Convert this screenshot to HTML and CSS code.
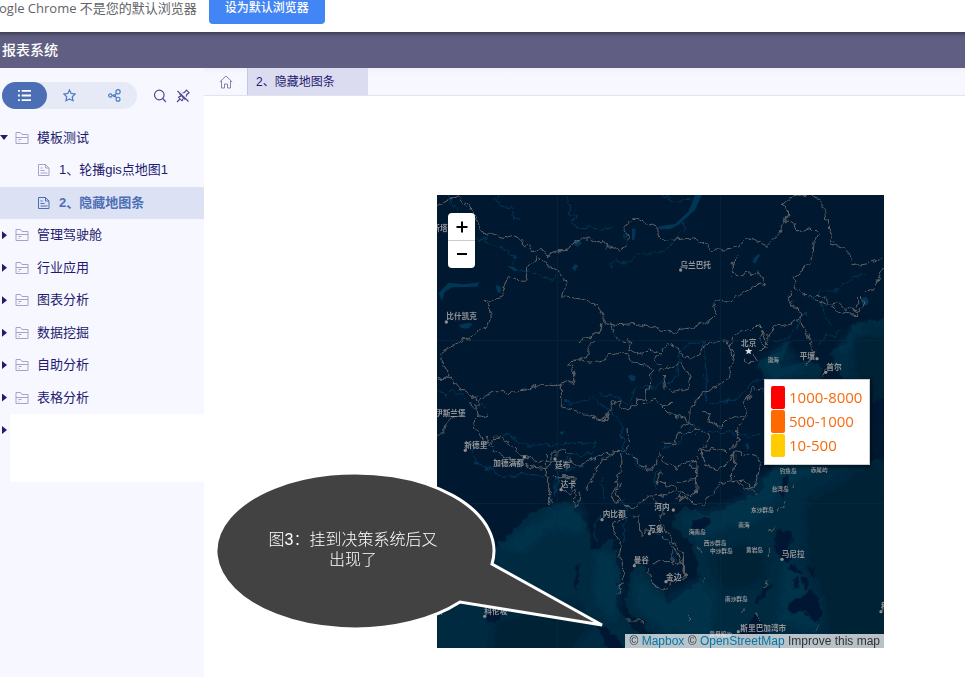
FILE: index.html
```html
<!DOCTYPE html>
<html lang="zh-CN">
<head>
<meta charset="utf-8">
<title>报表系统</title>
<link rel="stylesheet" href="styles.css">
</head>
<body>
<svg class="defs" aria-hidden="true">
  <symbol id="folder" viewBox="0 0 14 14"><path d="M1 12.500v-11h4.500l1.500 2h6v9zM1 6.500h12M3.500 8.500h3M3.500 10.500h1"/></symbol>
  <symbol id="file" viewBox="0 0 14 14"><path d="M1.500 1.500h7l3.500 3.500v7.500H1.500zM8.500 1.500V5H12M3.500 7.500h4M3.500 10h7M3.500 5h2"/></symbol>
</svg>
<div class="notice">
  <span class="notice-text">ogle Chrome 不是您的默认浏览器</span>
  <button class="notice-button" type="button">设为默认浏览器</button>
</div>
<header class="header"><h1>报表系统</h1></header>
<div class="workspace">
  <aside class="sidebar">
    <div class="tools">
      <div class="modes">
        <button class="mode active" type="button" aria-label="目录"><svg viewBox="0 0 14 14"><path d="M4 2h10M4 7h10M4 12h10M0 2h2M0 7h2M0 12h2"/></svg></button>
        <button class="mode" type="button" aria-label="收藏"><svg viewBox="0 0 14 14"><path d="M7 1l1.800 3.800 4.200.6-3 2.900.8 4.300L7 10.600l-3.800 2 .8-4.300-3-2.900 4.200-.6z"/></svg></button>
        <button class="mode" type="button" aria-label="分享"><svg viewBox="0 0 14 14"><circle cx="2.500" cy="7" r="1.800"/><circle cx="10.800" cy="3" r="2.300"/><circle cx="10.800" cy="11" r="2.100"/><circle cx="7" cy="7.200" r="1.100"/><path d="M4.300 7H6M7.800 6.300l1.300-1.500M7.800 8l1.500 1.500"/></svg></button>
      </div>
      <button class="tool" type="button" aria-label="搜索"><svg viewBox="0 0 14 14"><circle cx="6.300" cy="6" r="4.800"/><path d="M9.800 9.500l3 3.500"/></svg></button>
      <button class="tool" type="button" aria-label="取消固定"><svg viewBox="0 0 14 14"><path d="M6.500 4l2-.5 2-2.300 2.500 2.500-2.300 2-.5 2M3.500 4.800l5.800 5.700M5 7.500c-1.200-.2-2 .2-2.500.8l3.500 3.500c.8-.7 1-1.500.8-2.500M4 10l-3 3M1.500 2l11 10.500"/></svg></button>
    </div>
    <ul class="tree">
      <li class="row"><i class="arrow open"></i><svg class="icon"><use href="#folder"/></svg><a href="#">模板测试</a></li>
      <li class="row child"><svg class="icon"><use href="#file"/></svg><a href="#">1、轮播gis点地图1</a></li>
      <li class="row child selected"><svg class="icon"><use href="#file"/></svg><a href="#">2、隐藏地图条</a></li>
      <li class="row"><i class="arrow"></i><svg class="icon"><use href="#folder"/></svg><a href="#">管理驾驶舱</a></li>
      <li class="row"><i class="arrow"></i><svg class="icon"><use href="#folder"/></svg><a href="#">行业应用</a></li>
      <li class="row"><i class="arrow"></i><svg class="icon"><use href="#folder"/></svg><a href="#">图表分析</a></li>
      <li class="row"><i class="arrow"></i><svg class="icon"><use href="#folder"/></svg><a href="#">数据挖掘</a></li>
      <li class="row"><i class="arrow"></i><svg class="icon"><use href="#folder"/></svg><a href="#">自助分析</a></li>
      <li class="row"><i class="arrow"></i><svg class="icon"><use href="#folder"/></svg><a href="#">表格分析</a></li>
      <li class="row blank"><i class="arrow"></i><span class="cover"></span></li>
    </ul>
  </aside>
  <main class="main">
    <nav class="tabs">
      <a class="home" href="#" aria-label="首页"><svg viewBox="0 0 14 14"><path d="M.8 7L7 1l6.200 6M2.500 5.800v7.200h3V9h3v4h3V5.800"/></svg></a>
      <a class="tab" href="#">2、隐藏地图条</a>
    </nav>
    <div class="stage">
      <div class="map">
        <svg class="map-canvas" viewBox="0 0 1341 1359">
          <filter id="rough" x="0" y="0" width="1341" height="1359" filterUnits="userSpaceOnUse">
            <feTurbulence type="fractalNoise" baseFrequency=".045" numOctaves="2" seed="4"/>
            <feDisplacementMap in="SourceGraphic" scale="26" xChannelSelector="R" yChannelSelector="G"/>
          </filter>
          <filter id="haze" x="-20%" y="-20%" width="140%" height="140%"><feGaussianBlur stdDeviation="12"/></filter>
          <g filter="url(#rough)">
            <g class="sea" transform="translate(0 735)">
              <path d="M-20 650V500L130 420 160 330 200 300 260 240 300 205 340 200 400 180 412 210 440 240 462 290 455 325 490 325 510 300 525 295 550 400 540 480 550 520 600 570 630 650z"/>
              <path d="M665 650L650 590 620 545 575 520 565 490 575 440 590 375 625 380 640 420 680 455 685 490 730 465 780 430 785 370 760 310 705 260 715 225 750 200 800 225 850 210 900 185 960 160 1000 120 1020 60H1370V650z"/>
            </g>
            <g class="sea" transform="translate(849 315)">
              <path d="M115 190l30-25 25-10 20-30h20l-10 30-20 30 10 20 30-15 50-10 30 20 10 50 20 10v20H130v-60z"/>
              <path d="M330 155l45-25 5-30 25-30 35-5 80-20v255l-60 30v-90h-90l-20-30zM170 480h330V300l30 0v310H100l30-60z"/>
            </g>
            <g class="shelf" filter="url(#haze)">
              <path d="M330 945l90-30 35 45-20 60-120-20zM470 1065l70 10 15 130-20 90-70-80zM590 1125l80 80 120-60-10-120-60-60 180-50 90-90 110-60 60 60-120 50-60 100-180 50-20 120 60 60-20 140-130-30-100-80zM960 500l90-60 60 90-100 30zM1190 470l60-80 40-10-30 90zM1040 1080l60 60 60 100-20 80-120-40zM180 1060l120-90 60 20-100 90z"/>
            </g>
            <g class="deep" filter="url(#haze)"><path d="M1110 920l270-160v650H1190l-30-200-50-120zM1250 420l120 0v200l-110 40zM820 1090l90-40 80 30-10 80-110 30zM170 1280l250-60 30 80-60 80H170z"/></g>
            <g class="land" transform="translate(0 735)">
              <path d="M770 240l45-8 5 15-20 30-30-10zM1035 112l20-5-5 38-15 32-10-30zM1020 270l40-2 8 35-15 40 12 17-20 8-27-25-5-30zM1055 370l20 8 22 20-10 5-25-12zM1065 420l15-8 8 30-12 10zM1095 410l20 8-5 35-12-15zM1110 375l22 5 3 30-12-8zM1055 490l50-25 20-18 15 25 15 43-15 32-20-8-18-27-42 8zM950 490l30-40 25-22 5 8-30 38-25 22zM895 650l10-70 40-40 10-25 20 25 15 50 0 60zM145 530l15-20 25-5 5 25-20 22-20-5zM470 553l35 10 40 38 40 50h-60l-30-70zM422 375h8l-5 50-10 20-2-15zM650 385l15 5 15 18-10-2z"/>
            </g>
            <path class="land" d="M1290 635l45-25 30 5v60l-35-5-20 20zM1210 580l20-10 15 40-20 10z"/>
          </g>
          <g class="lakes">
            <path d="M5 295l30-32 45 5 48-6-8 13-75 2-22 14-8 27zM175 270l15 4 3 16-10 5zM65 390l30-7 13 4-15 14-20-2zM410 135l15 0 10 10-14 11-10-7zM405 220l8-12 11 3-10 18zM210 212l20 3 14 12-12 2zM585 100l11 3-3 28-8 7zM660 96l15-4v14zM669 94l45-7 40-37 20-50 20 0-20 45-50 45-25 12-30 1zM950 190l14-13 5 4-14 25-8-5zM960 225l8 2-4 8-5-3zM1273 310l15-5 8 15-7 13-14-5zM573 542l12-3 11 6-3 14-12-2zM366 711l17-2-8 12zM925 745l8 1 4 13-6 7z"/>
          </g>
          <g class="rivers" filter="url(#rough)">
            <path d="M30 0l10 20 25 32M185 0l-12 12 20 22 32 4 5 34 25-2M390 0l0 25 12 10-5 20 20 10-12 20 22 17 50-5 10 10 45-10M525 220l-3-17 13-7 35 12 36-34 60 0M115 130l35 7 30 20 25 2 15 20 20 10-15 20M245 230l35-5 20 15 50 14 10-22M555 105l14 10-8 22M678 0l30 20 55-5M728 80l15 10-20 35-10 20-45 28M1290 235l-50 15-40 38-40 0-20 12M1110 305l30 12 20 20 10 40 20 12M1145 450l20-30 30 4 20-25M1110 355l-20 15-10 30-20 20-40 20"/>
            <path d="M0 590l30 10 20-20 40 38 30 32 10-25 13 20M190 720l40 10 30 20 180-2 40-12-15 40-60 5-70 25M383 640v-18l30 3 50-15 60 40 30 30 5 60-5 50M490 600l50 7 40 25 12-55 40-5 20 10 20-20M110 740l-10 30 20 35 40 20 40 22 60-10 60 5M355 820l25 10 60-20 50-30M360 825l-5 80M565 765l20 15 15 30 25 15M655 885v-50l20-15"/>
            <path d="M673 565l20 5 20-20 15-80 25-25 50-2 5 140-3 30 10 15 80-12 60-60 40-5M670 760l50-10 50-60 40 20 100 5 30 15 25-20M500 915l-5-40 5-30M560 1040l4-130M340 890l10 40M485 960l-15 60 10 30M640 1000l60 40 20 70"/>
          </g>
          <g class="borders" filter="url(#rough)">
            <path d="M0 33l20-10 40-23 10 5 35 45 15 30 28 47 10-15 15 10 25 8 30-10 15 5 20 25 25 20 22-7 10 17 15 2 25-15 25 0 20-17 30-22 20 2 20 10 25 0 10 15 40 7 20-10 3-20-10-20 5-25 20-20 45 15 30 18 0 24 20 15 55-7 35-3 25 15 25 22 50-2 30-10 30-25 20 5 20 8 20 10 30-30 20-45 10-20-5-22-10-8 20-18 50-12 30 12 20 20 10 30 5 25 15 55 0 10 30 8 25 25 5 30 40-5 50-20"/>
            <path d="M300 182l-3 20-25 15-5 35-30 2-25-6-20 60-45 12 10 15 3 35-5 20-40 25-30 20-15 20M310 185l15 25 35 15 22 30 3 20-8 30 60 7 45 25 15 30 10 20 45 5 60-5 50 15 40 12 20-10 50-7 50-25 15-15-10-25 10-15 40 5 60-40 20-10 30-3-20-32-30-3-30 8-25-5 5-25 15-35M495 385l-5 25-35 15-30 22M520 385l10 30 15 20 35 7M1049 45l-5 30 25 3 10 30 50-8 15 15-13 30-3 30-15 35-45 35 15 35 20 20 20 5 30-5 30 30 25-5 20 20 10-8 30 15 10-25-5-25 20-20 20 0 10-30 15-30 20-40"/>
            <path d="M1060 285l0 25 10 30 20-3 5 30-30 15-50 15-20 25-20-15-10 30 20 20-20 15M885 495l-5-40 10-30 30-20 20 5 20-20 15 15 15 40 10-35M1090 370l5 20 20 40 15 40-20 40M1259 310l0 50-50-10-40-20-40-15M920 485v15h35v-20M1165 520l-5 25"/>
            <path d="M100 435l-20 0-20 10-25 10-25 25 5 35 20 5 0 25-20 3-15-5M0 550l45 0 20 25 55 35 30-5 10-15 50 0 50-4 50-18 50 4 20-5 30-10 0-30-15-20 15-10 40-10 10-40 15-13M410 495l50 10 40-8 15-18 40-5 20 15 50 20 20 25-5 30-10 20-5 30-25-5-2 20-25 15-20-5-5-25-15 5-10 20-15 35-30-5-25-10-80-25-3-45 0-20M120 615l0 30 10 20-20 20 15 40 40 20 20-22 45 35 20 22 45 15 20 5 80-5 15 12 25 0 50-20 20-10 40-10 20-5 10-10-5-50M155 722l-5 20 40 40 20 7 60 25 40 5 35-5 0-40 15 0 20-12 10 12 15 0M325 780l0 60 10 10 0 80M345 845l70 0-3 20M450 885l15-30 10-35 45-40 25-15 10 30-5 35-20 55-5 35 25 5M565 765l20 25 25 10 20 25 15 0 25-50M670 510l-20-20 20-15-35-10-25 20-35-20 10-25-20-10M0 730l20-20 5-20 25-25M100 620l35 45 20-5M620 630l30-20 15 20 40-5"/>
            <path d="M669 530l15-15 25 5 20-20 30 40-5 40-45 12-25-20-5-32M669 475l25-30 70 50 30-35 30-20 40-5 30 40-15 45-5 30-40 30-40 15-15 20-20 35 0 35-25 10M669 630l25 25 50 15 35 35-15 10-40 0-10 30-30 0M790 650l25 0 5 30 30 15 25-25 35-5 15-10-3-30 25-45 20 5 20-10M779 705l40 15-20 40-30 40-10 20 20 0 0 30-60 10M880 765l30-30-15-30 20-20 10-20M890 770l-10 30-40 25-35-15-10-40 25-10 50 10M675 780l5 25 40 15 30-20 30 0 0 40-5 60-40-5-20 10M890 770l70 15 10 20-15 70-30 10-20-25-20 0 5-60 0-30M740 905l60 30 20-40 30-30 75-10 30 40M670 830l-10 30 60 20 25 20"/>
            <path d="M340 880l0 35 10 10M370 880l25 20 15-20 5 20-5 40 15-10 5-40M580 960l-30 15-20 5 0 30 20 35-5 30 10 30 10 30-5 20-20 40M555 865l-20 15 10 30 20 25 35 0 20-20 40-20 30 5 25-15 15 25 20 5M585 960l20 0 5 65 15-20 45 5 50 60 25 50-5 35M635 1120l-5 15 25 40 20 8 10-8M645 1100h60v10l40-20-5 50-30 25M705 1065l0 35M650 905l30 45-10 30 30 50 45 60 0 50M685 1185l25-20-10-10M565 1275l40 0 20 20M955 1250l10 15 10 10"/>
            <path d="M1045 925l-20 25M1010 995l-15 20M994 1060v25M990 1150l-10 30M930 1240l-15 18M780 1055l15 25M803 1145l-3 25M757 1260v20M1130 1310l20-20M1073 865l-5 20"/>
          </g>
          <path class="grid-line" d="M361 0V1359M850 0V1359M0 437H1341M0 926H1341"/>
          <path class="capital" d="M935 458l3 7 8 0-6 5 2 8-7-4-7 4 2-8-6-5 8 0z"/>
          <g class="dots">
            <circle cx="28" cy="381" r="5"/><circle cx="731" cy="225" r="5"/><circle cx="1140" cy="491" r="5"/><circle cx="1166" cy="532" r="5"/><circle cx="85" cy="766" r="5"/><circle cx="262" cy="786" r="5"/><circle cx="354" cy="792" r="5"/><circle cx="372" cy="884" r="5"/><circle cx="495" cy="974" r="5"/><circle cx="709" cy="945" r="5"/><circle cx="637" cy="1016" r="5"/><circle cx="592" cy="1112" r="5"/><circle cx="687" cy="1160" r="5"/><circle cx="1035" cy="1093" r="5"/><circle cx="143" cy="1264" r="5"/><circle cx="904" cy="1310" r="5"/><circle cx="1332" cy="1250" r="5"/>
          </g>
          <g class="labels">
            <text x="-14" y="108">斯塔纳</text><text x="28" y="373">比什凯克</text><text x="730" y="218">乌兰巴托</text><text x="912" y="453">北京</text><text x="1088" y="493">平壤</text><text x="1168" y="525">首尔</text><text x="-6" y="662">伊斯兰堡</text><text x="82" y="759">新德里</text><text x="169" y="813">加德满都</text><text x="354" y="819">廷布</text><text x="371" y="877">达卡</text><text x="497" y="967">内比都</text><text x="652" y="946">河内</text><text x="634" y="1010">万象</text><text x="590" y="1105">曼谷</text><text x="687" y="1155">金边</text><text x="1034" y="1086">马尼拉</text><text x="142" y="1257">科伦坡</text><text x="910" y="1308">斯里巴加湾市</text><text x="-28" y="1257">马累</text><text x="1332" y="1242">科</text>
            <g class="small"><text x="992" y="501">渤海</text><text x="1028" y="835">钓鱼岛</text><text x="1121" y="832">赤尾屿</text><text x="1004" y="888">台湾岛</text><text x="942" y="951">东沙群岛</text><text x="904" y="996">南海</text><text x="755" y="1018">海南岛</text><text x="800" y="1049">西沙群岛</text><text x="819" y="1074">中沙群岛</text><text x="927" y="1072">黄岩岛</text><text x="864" y="1219">南沙群岛</text><text x="817" y="1323">曾母暗沙</text></g>
          </g>
        </svg>
        <div class="zoom">
          <button type="button" aria-label="放大"><svg viewBox="0 0 12 12"><path d="M6 .5v11M.5 6h11"/></svg></button>
          <button type="button" aria-label="缩小"><svg viewBox="0 0 12 12"><path d="M1 6h10"/></svg></button>
        </div>
        <ul class="legend">
          <li><i class="swatch red"></i>1000-8000</li>
          <li><i class="swatch orange"></i>500-1000</li>
          <li><i class="swatch yellow"></i>10-500</li>
        </ul>
        <div class="credit">© <a href="#">Mapbox</a> © <a href="#">OpenStreetMap</a> <a class="improve" href="#">Improve this map</a></div>
        <div class="callout">
          <svg viewBox="0 0 396 164"><path d="M278 94A139 78 0 1 0 246 132L388 155z"/></svg>
          <p>图3：挂到决策系统后又出现了</p>
        </div>
      </div>
    </div>
  </main>
</div>
</body>
</html>
```
FILE: styles.css
```css
* { box-sizing: border-box; }
body {
  margin: 0;
  min-height: 100vh;
  display: flex;
  flex-direction: column;
  overflow: hidden;
  background: #fff;
  color: #231a6e;
  font: 13px/20px "Liberation Sans", "Noto Sans CJK SC", sans-serif;
}
a { color: inherit; text-decoration: none; }
button { border: 0; padding: 0; background: none; color: inherit; font: inherit; }
ul { list-style: none; margin: 0; padding: 0; }
svg { fill: none; stroke: currentColor; }
.defs { position: absolute; width: 0; height: 0; }

.notice {
  display: flex;
  align-items: center;
  gap: 12px;
  height: 40px;
  margin: -8px 0 0 -1px;
  padding-bottom: 8px;
  color: #5f6368;
  font-family: "Open Sans", "Noto Sans CJK SC", sans-serif;
  white-space: nowrap;
}
.notice-button {
  width: 116px;
  height: 32px;
  border-radius: 4px;
  background: #4285f4;
  color: #fff;
  font-size: 12px;
  font-weight: 500;
}
.header {
  height: 36px;
  padding: 0 2px;
  background: linear-gradient(#3f3e56, #5b5a7b 4px, #605f83 8px);
  color: #fff;
}
.header h1 { margin: 0; font-size: 14px; font-weight: 500; line-height: 36px; }

.workspace { flex: 1; display: flex; }
.sidebar { flex: 0 0 204px; background: #f7f7ff; }
.tools { display: flex; align-items: center; padding: 14px 2px 13px; }
.modes { display: flex; margin-right: 16px; border-radius: 14px; background: #e5eaf6; color: #4c7cc4; }
.mode { display: grid; place-items: center; width: 45px; height: 27px; border-radius: 14px; }
.mode svg { width: 13px; height: 13px; stroke-width: 1.3; }
.mode.active { background: #4c6eb5; color: #fff; }
.mode.active svg { stroke-width: 2; }
.tool { width: 14px; height: 14px; margin-right: 9px; color: #514994; }
.tool svg { display: block; width: 14px; height: 14px; stroke-width: 1.2; }

.tree { display: flex; flex-direction: column; justify-content: space-between; height: 324px; }
.row { display: flex; align-items: center; height: 32px; white-space: nowrap; }
.row.child { padding-left: 37px; }
.selected { background: #dce2f4; color: #4c6eb5; font-weight: 700; }
.arrow { width: 15px; height: 8px; }
.arrow::before {
  content: "";
  display: block;
  width: 5px;
  height: 8px;
  margin-left: 2px;
  background: #231a6e;
  clip-path: polygon(0 0, 100% 50%, 0 100%);
}
.arrow.open::before { width: 8px; height: 5px; margin: 1px 0 0; clip-path: polygon(0 0, 100% 0, 50% 100%); }
.icon { width: 14px; height: 14px; margin-right: 8px; color: #a5a1c8; }
.selected .icon { color: #4c6eb5; }
.blank { align-items: flex-start; }
.blank .arrow { width: 10px; margin-top: 12px; }
.cover { flex: 1; height: 68px; background: #fff; }

.main { flex: 1; min-width: 0; }
.tabs { display: flex; height: 28px; border-bottom: 1px solid #e2e3f2; background: linear-gradient(#f0f0fa, #f7f7ff 6px); }
.home { display: grid; place-items: center; width: 43px; color: #8580b3; }
.home svg { width: 14px; height: 14px; }
.tab { width: 121px; padding-left: 8px; border-left: 1px solid #c8c6e2; background: #dcdcf1; font-size: 12px; line-height: 29px; }
.stage { padding: 99px 81px 29px 233px; }
.map { position: relative; color: #000; }
.map-canvas { display: block; width: 100%; aspect-ratio: 447 / 453; overflow: hidden; background: #001930; }
.map-canvas g, .map-canvas path, .map-canvas text { stroke: none; }
.sea { fill: #012b41; }
.shelf { fill: #013a54; opacity: .45; }
.deep { fill: #001c2e; opacity: .6; }
.land { fill: #001930; }
.lakes { fill: #013656; }
.map-canvas .rivers path { stroke: #01395a; stroke-width: 3; }
.map-canvas .borders path { stroke: #646466; stroke-width: 3; stroke-linejoin: bevel; }
.map-canvas .grid-line { stroke: #0c2b40; stroke-width: 2; }
.capital { fill: #ddd; }
.dots { fill: #8d8d8f; }
.labels { fill: #939496; font-size: 23px; font-weight: 700; }
.labels .small { font-size: 17px; }

.zoom {
  position: absolute;
  top: 18px;
  left: 11px;
  width: 27px;
  border-radius: 4px;
  background: #fff;
}
.zoom button { display: grid; place-items: center; width: 100%; height: 27px; }
.zoom button + button { height: 28px; padding-bottom: 2px; border-top: 1px solid #ccc; }
.zoom svg { width: 12px; height: 12px; stroke-width: 2; }
.legend {
  position: absolute;
  top: 184px;
  right: 14px;
  width: 106px;
  padding: 5px 6px 7px;
  background: #fff;
  border: 1px solid #ccd0d4;
  box-shadow: 1px 2px 4px #0008;
  color: #f76b0f;
  font: 15px/24px "Open Sans", sans-serif;
  white-space: nowrap;
}
.legend li { display: flex; align-items: center; gap: 4px; }
.swatch { width: 14px; height: 23px; border-radius: 2px; }
.red { background: #f00; }
.orange { background: #ff6a00; }
.yellow { background: #fc0; }
.credit {
  position: absolute;
  right: 0;
  bottom: 0;
  padding: 0 4px;
  background: #ffffffb8;
  color: #333;
  font-size: 12px;
  line-height: 14px;
  white-space: nowrap;
}
.credit a { color: #0078a8; }
.credit .improve { color: #333; }
.callout { position: absolute; top: 275px; left: -223px; width: 396px; }
.callout svg { display: block; width: 100%; }
.callout path { fill: #424242; stroke: #fff; stroke-width: 3; }
.callout p {
  position: absolute;
  top: 60px;
  left: 52px;
  width: 174px;
  margin: 0;
  color: #fff;
  font-size: 16px;
  font-weight: 300;
  line-height: 20px;
  text-align: center;
}
```
